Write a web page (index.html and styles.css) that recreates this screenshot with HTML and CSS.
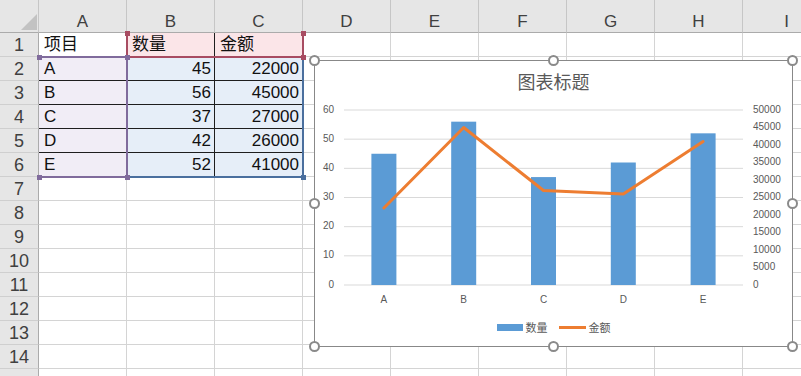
FILE: index.html
```html
<!DOCTYPE html>
<html lang="zh-CN">
<head>
    <meta charset="UTF-8">
    <title>Sheet with chart</title>
    <link rel="stylesheet" href="styles.css">
</head>
<body>
<div class="sheet">
    <div class="row head">
        <div class="corner"><span class="tri"></span></div>
        <div class="colh">A</div><div class="colh">B</div><div class="colh">C</div><div class="colh">D</div><div class="colh">E</div><div class="colh">F</div><div class="colh">G</div><div class="colh">H</div><div class="colh">I</div>
    </div>
    <div class="row">
        <div class="rowh">1</div>
        <div class="cell t">项目</div><div class="cell t pink">数量</div><div class="cell t pink">金额</div>
        <div class="cell"></div><div class="cell"></div><div class="cell"></div><div class="cell"></div><div class="cell"></div><div class="cell"></div>
    </div>
    <div class="row">
        <div class="rowh">2</div>
        <div class="cell t lav">A</div><div class="cell t blue num">45</div><div class="cell t blue num">22000</div>
        <div class="cell"></div><div class="cell"></div><div class="cell"></div><div class="cell"></div><div class="cell"></div><div class="cell"></div>
    </div>
    <div class="row">
        <div class="rowh">3</div>
        <div class="cell t lav">B</div><div class="cell t blue num">56</div><div class="cell t blue num">45000</div>
        <div class="cell"></div><div class="cell"></div><div class="cell"></div><div class="cell"></div><div class="cell"></div><div class="cell"></div>
    </div>
    <div class="row">
        <div class="rowh">4</div>
        <div class="cell t lav">C</div><div class="cell t blue num">37</div><div class="cell t blue num">27000</div>
        <div class="cell"></div><div class="cell"></div><div class="cell"></div><div class="cell"></div><div class="cell"></div><div class="cell"></div>
    </div>
    <div class="row">
        <div class="rowh">5</div>
        <div class="cell t lav">D</div><div class="cell t blue num">42</div><div class="cell t blue num">26000</div>
        <div class="cell"></div><div class="cell"></div><div class="cell"></div><div class="cell"></div><div class="cell"></div><div class="cell"></div>
    </div>
    <div class="row">
        <div class="rowh">6</div>
        <div class="cell t lav">E</div><div class="cell t blue num">52</div><div class="cell t blue num">41000</div>
        <div class="cell"></div><div class="cell"></div><div class="cell"></div><div class="cell"></div><div class="cell"></div><div class="cell"></div>
    </div>
    <div class="row"><div class="rowh">7</div><div class="cell"></div><div class="cell"></div><div class="cell"></div><div class="cell"></div><div class="cell"></div><div class="cell"></div><div class="cell"></div><div class="cell"></div><div class="cell"></div></div>
    <div class="row"><div class="rowh">8</div><div class="cell"></div><div class="cell"></div><div class="cell"></div><div class="cell"></div><div class="cell"></div><div class="cell"></div><div class="cell"></div><div class="cell"></div><div class="cell"></div></div>
    <div class="row"><div class="rowh">9</div><div class="cell"></div><div class="cell"></div><div class="cell"></div><div class="cell"></div><div class="cell"></div><div class="cell"></div><div class="cell"></div><div class="cell"></div><div class="cell"></div></div>
    <div class="row"><div class="rowh">10</div><div class="cell"></div><div class="cell"></div><div class="cell"></div><div class="cell"></div><div class="cell"></div><div class="cell"></div><div class="cell"></div><div class="cell"></div><div class="cell"></div></div>
    <div class="row"><div class="rowh">11</div><div class="cell"></div><div class="cell"></div><div class="cell"></div><div class="cell"></div><div class="cell"></div><div class="cell"></div><div class="cell"></div><div class="cell"></div><div class="cell"></div></div>
    <div class="row"><div class="rowh">12</div><div class="cell"></div><div class="cell"></div><div class="cell"></div><div class="cell"></div><div class="cell"></div><div class="cell"></div><div class="cell"></div><div class="cell"></div><div class="cell"></div></div>
    <div class="row"><div class="rowh">13</div><div class="cell"></div><div class="cell"></div><div class="cell"></div><div class="cell"></div><div class="cell"></div><div class="cell"></div><div class="cell"></div><div class="cell"></div><div class="cell"></div></div>
    <div class="row"><div class="rowh">14</div><div class="cell"></div><div class="cell"></div><div class="cell"></div><div class="cell"></div><div class="cell"></div><div class="cell"></div><div class="cell"></div><div class="cell"></div><div class="cell"></div></div>
    <div class="row"><div class="rowh"></div><div class="cell"></div><div class="cell"></div><div class="cell"></div><div class="cell"></div><div class="cell"></div><div class="cell"></div><div class="cell"></div><div class="cell"></div><div class="cell"></div></div>

    <!-- chart source range highlights -->
    <div class="range range-blue"></div>
    <div class="range range-lav"></div>
    <div class="range range-red"></div>
    <span class="knob k-red" style="left:125px;top:31px"></span>
    <span class="knob k-red" style="left:301px;top:31px"></span>
    <span class="knob k-red" style="left:301px;top:55px"></span>
    <span class="knob k-lav" style="left:37px;top:55px"></span>
    <span class="knob k-lav" style="left:125px;top:55px"></span>
    <span class="knob k-lav" style="left:37px;top:175px"></span>
    <span class="knob k-lav" style="left:125px;top:175px"></span>
    <span class="knob k-blue" style="left:301px;top:175px"></span>

    <div class="chart">
        <div class="chart-title">图表标题</div>
        <svg class="plot" width="477" height="210" viewBox="0 0 477 210">
            <g class="grid">
                <line x1="29" y1="9" x2="428" y2="9"/>
                <line x1="29" y1="38.17" x2="428" y2="38.17"/>
                <line x1="29" y1="67.33" x2="428" y2="67.33"/>
                <line x1="29" y1="96.5" x2="428" y2="96.5"/>
                <line x1="29" y1="125.67" x2="428" y2="125.67"/>
                <line x1="29" y1="154.83" x2="428" y2="154.83"/>
                <line x1="29" y1="184" x2="428" y2="184"/>
            </g>
            <g class="axis left">
                <text x="19" y="9">60</text>
                <text x="19" y="38.17">50</text>
                <text x="19" y="67.33">40</text>
                <text x="19" y="96.5">30</text>
                <text x="19" y="125.67">20</text>
                <text x="19" y="154.83">10</text>
                <text x="19" y="184">0</text>
            </g>
            <g class="axis right">
                <text x="438" y="9">50000</text>
                <text x="438" y="26.5">45000</text>
                <text x="438" y="44">40000</text>
                <text x="438" y="61.5">35000</text>
                <text x="438" y="79">30000</text>
                <text x="438" y="96.5">25000</text>
                <text x="438" y="114">20000</text>
                <text x="438" y="131.5">15000</text>
                <text x="438" y="149">10000</text>
                <text x="438" y="166.5">5000</text>
                <text x="438" y="184">0</text>
            </g>
            <g class="bars">
                <rect x="56.4" y="52.75" width="25" height="131.25"/>
                <rect x="136.2" y="20.67" width="25" height="163.33"/>
                <rect x="216" y="76.08" width="25" height="107.92"/>
                <rect x="295.8" y="61.5" width="25" height="122.5"/>
                <rect x="375.6" y="32.33" width="25" height="151.67"/>
            </g>
            <polyline class="amount" points="68.9,107 148.7,26.5 228.5,89.5 308.3,93 388.1,40.5"/>
            <g class="axis cats">
                <text x="68.9" y="199">A</text>
                <text x="148.7" y="199">B</text>
                <text x="228.5" y="199">C</text>
                <text x="308.3" y="199">D</text>
                <text x="388.1" y="199">E</text>
            </g>
        </svg>
        <div class="legend">
            <span class="key"><i class="swatch"></i>数量</span>
            <span class="key"><i class="stroke"></i>金额</span>
        </div>
        <span class="handle" style="left:-6px;top:-6px"></span>
        <span class="handle" style="left:233px;top:-6px"></span>
        <span class="handle" style="left:472px;top:-6px"></span>
        <span class="handle" style="left:-6px;top:137px"></span>
        <span class="handle" style="left:472px;top:137px"></span>
        <span class="handle" style="left:-6px;top:280px"></span>
        <span class="handle" style="left:233px;top:280px"></span>
        <span class="handle" style="left:472px;top:280px"></span>
    </div>
</div>
</body>
</html>
```

FILE: styles.css
```css
body {
    margin: 0;
    background-color: #ffffff;
    font-family: "Liberation Sans", "Noto Sans CJK SC", sans-serif;
}
.sheet {
    position: relative;
    width: 801px;
    height: 376px;
    overflow: hidden;
    background-color: #ffffff;
}
.row {
    display: flex;
    height: 24px;
}
.row.head {
    height: 33px;
    background-color: #e6e6e6;
}
.corner {
    position: relative;
    flex: 0 0 39px;
    box-sizing: border-box;
    border-right: 1px solid #c6c6c6;
    border-bottom: 1px solid #ababab;
}
.tri {
    position: absolute;
    left: 21px;
    top: 14px;
    width: 16px;
    height: 16px;
    background-color: #c2c2c2;
    clip-path: polygon(100% 0, 100% 100%, 0 100%);
}
.colh {
    flex: 0 0 88px;
    box-sizing: border-box;
    padding-top: 10px;
    line-height: 24px;
    text-align: center;
    font-size: 17px;
    color: #404040;
    border-right: 1px solid #c6c6c6;
    border-bottom: 1px solid #ababab;
}
.rowh {
    flex: 0 0 39px;
    box-sizing: border-box;
    line-height: 24px;
    text-align: center;
    font-size: 18px;
    color: #404040;
    background-color: #e6e6e6;
    border-right: 1px solid #ababab;
    border-bottom: 1px solid #cfcfcf;
}
.cell {
    flex: 0 0 88px;
    box-sizing: border-box;
    padding: 0 3px 0 5px;
    line-height: 24px;
    font-size: 17px;
    color: #111111;
    white-space: nowrap;
    border-right: 1px solid #d4d4d4;
    border-bottom: 1px solid #d4d4d4;
}
.cell.t {
    border-right-color: #1e1e1e;
    border-bottom-color: #1e1e1e;
}
.cell.num {
    text-align: right;
}
.pink { background-color: #fbe5e8; }
.lav { background-color: #f1edf6; }
.blue { background-color: #e6eef8; }

.range {
    position: absolute;
    box-sizing: border-box;
}
.range-blue {
    left: 127px;
    top: 56px;
    width: 177px;
    height: 122px;
    border-right: 2px solid #4a6f9e;
    border-bottom: 2px solid #4a6f9e;
}
.range-lav {
    left: 39px;
    top: 56px;
    width: 89px;
    height: 122px;
    border-top: 2px solid #806b9c;
    border-right: 2px solid #806b9c;
    border-bottom: 2px solid #806b9c;
}
.range-red {
    left: 126px;
    top: 33px;
    width: 178px;
    height: 25px;
    border-left: 2px solid #a84c62;
    border-right: 2px solid #a84c62;
    border-bottom: 2px solid #a84c62;
}
.knob {
    position: absolute;
    width: 5px;
    height: 5px;
}
.k-red { background-color: #a84c62; }
.k-lav { background-color: #806b9c; }
.k-blue { background-color: #4a6f9e; }

.chart {
    position: absolute;
    left: 314px;
    top: 60px;
    width: 479px;
    height: 287px;
    box-sizing: border-box;
    border: 1px solid #888888;
    background-color: #ffffff;
    display: flex;
    flex-direction: column;
}
.chart-title {
    height: 40px;
    line-height: 40px;
    text-align: center;
    font-size: 18px;
    color: #595959;
    font-family: "Noto Sans CJK SC", sans-serif;
}
.plot {
    display: block;
}
.grid line {
    stroke: #d9d9d9;
    stroke-width: 1;
}
.axis text {
    font-family: "Liberation Sans", "Noto Sans CJK SC", sans-serif;
    font-size: 10px;
    fill: #595959;
    dominant-baseline: middle;
}
.axis.left text { text-anchor: end; }
.axis.right text { text-anchor: start; }
.axis.cats text { text-anchor: middle; }
.bars rect {
    fill: #5b9bd5;
}
.amount {
    fill: none;
    stroke: #ed7d31;
    stroke-width: 3;
    stroke-linejoin: round;
    stroke-linecap: round;
}
.legend {
    height: 32px;
    display: flex;
    justify-content: center;
    align-items: center;
    gap: 11px;
    font-size: 11px;
    color: #595959;
    font-family: "Noto Sans CJK SC", sans-serif;
}
.key {
    display: flex;
    align-items: center;
    gap: 3px;
}
.swatch {
    width: 26px;
    height: 7px;
    background-color: #5b9bd5;
}
.stroke {
    width: 27px;
    height: 3px;
    background-color: #ed7d31;
}
.handle {
    position: absolute;
    width: 11px;
    height: 11px;
    box-sizing: border-box;
    border: 2px solid #8a8a8a;
    border-radius: 50%;
    background-color: #ffffff;
}
```
